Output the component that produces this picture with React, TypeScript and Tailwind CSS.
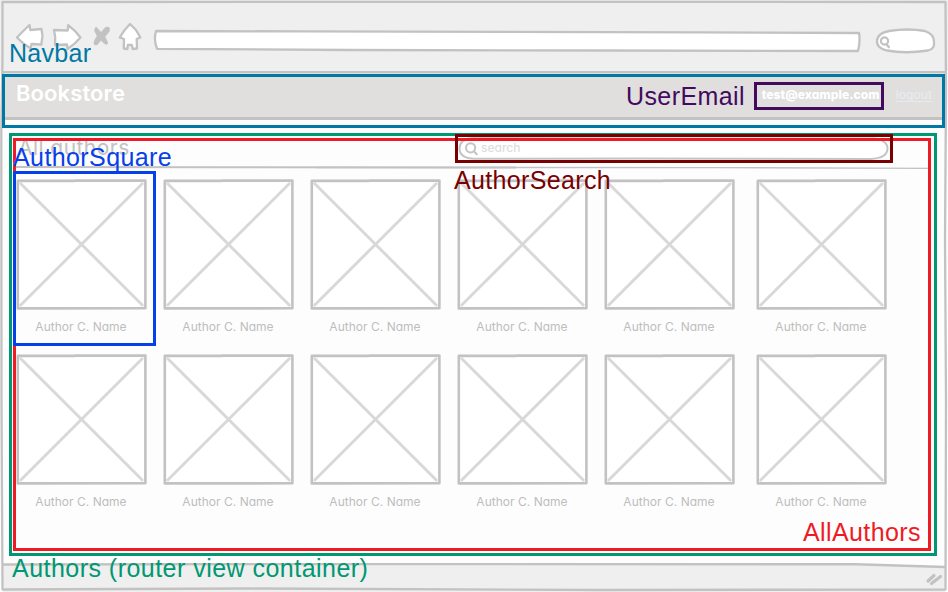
const SKETCH_FONT = "font-['Inter',sans-serif] [font-feature-settings:'cv11'] leading-none whitespace-nowrap";

function AuthorSquare({ name }: { name: string }) {
  return (
    <div className="flex h-[175px] w-[131px] flex-col items-center">
      <svg width="131" height="131" viewBox="0 0 131 131" fill="none" strokeLinecap="round" strokeLinejoin="round">
        <rect x="1.5" y="1.5" width="128" height="128" fill="#fff" />
        <path d="M4.8 4.8L126.2 126M126.2 4.8L4.8 126" stroke="#d8d8d8" strokeWidth="2.9" />
        <path d="M1.8 1.9L58 1.9L60 1.6L129.4 1.6L129.4 129.3L26 129.4L1.8 129.4Z" stroke="#c2c2c2" strokeWidth="2.6" />
      </svg>
      <span className={`${SKETCH_FONT} mt-[11px] pr-px text-[12px] tracking-[0.02px] text-[#bdbdbd]`}>{name}</span>
    </div>
  );
}

function BrowserBar() {
  return (
    <header className="h-[71px] shrink-0 bg-[#efefef]">
      <svg width="948" height="71" viewBox="0 0 948 71" fill="#fff" stroke="#c2c2c2" strokeWidth="2.3" strokeLinejoin="round" strokeLinecap="round">
        <path d="M17 37.5Q24 30 29.5 25L30.3 30L41.5 29L42.5 36L41.3 44.5L31.5 44L30.5 48.5Q22 43 17 37.5Z" />
        <path d="M54 30L67.7 30.5L68.2 25.2Q75 30 80.5 37.5Q75 44 67.5 49L67 44.5L55 45L55.2 37Z" />
        <path d="M96 28L101 33.5L106 28Q110 27 108.6 31L104 36.5L107 42.5Q106.5 45 103.8 42L101 39L97 44Q93.5 45.5 95.2 40.5L98 36L95.2 30.5Z" fill="#c2c2c2" strokeWidth="2" />
        <path d="M130 24L136 30L140.4 37.5L136.7 39L137 48.5L132.7 49L131.8 45L127.8 45L127.4 49L123.8 48.5L124 39L119.7 37.5Q124 30 130 24Z" />
        <path d="M156 31L300 31.4L700 32.3L859 33Q860.5 42 858 51L600 50.5L350 50L157 48.8Q153.5 40 156 31Z" />
        <path d="M889 31Q908 28 925 31Q934 34 934 42Q935 49 928 50.5Q905 54 887 50.5Q876 48 877 40Q878 33 889 31Z" />
        <circle cx="884.5" cy="41" r="3.6" fill="none" strokeWidth="2.2" />
        <path d="M886.7 44.5L888.7 47" strokeWidth="2.4" />
      </svg>
    </header>
  );
}

function Navbar() {
  return (
    <nav className="ml-[2px] mr-[2px] flex h-[49px] shrink-0 items-start border-b-[3px] border-t-2 border-[#c2c2c2] bg-[#e0dfde] pl-[14px] pr-[14px]">
      <span className={`${SKETCH_FONT} mt-[9px] flex-1 text-[22px] font-semibold tracking-[0.1px] text-white`}>Bookstore</span>
      <span className={`${SKETCH_FONT} mt-[16px] w-[134px] text-[12px] font-extrabold tracking-[0.08px] text-white`}>test@example.com</span>
      <a className={`${SKETCH_FONT} mt-[16px] text-[12px] font-medium text-[#e7ebf0] underline underline-offset-2`}>logout</a>
    </nav>
  );
}

function SearchField() {
  return (
    <div className="relative flex h-[23px] w-[431px] items-center pl-[23px]">
      <svg className="absolute inset-0" width="431" height="23" viewBox="0 0 431 23" fill="none" stroke="#c4c4c4" strokeWidth="2" strokeLinecap="round">
        <path d="M14 1L200 1.4L416 1.5Q429.5 3 429.5 12Q429 21 413 22L180 21.5L16 21.8Q1.5 21 1.5 11.5Q2 2 14 1Z" fill="#fff" />
        <circle cx="12.6" cy="10.8" r="4.6" />
        <path d="M15.8 14.2L18.8 17.2" />
      </svg>
      <span className={`${SKETCH_FONT} relative mb-[2px] text-[12px] font-medium text-[#dedede]`}>search</span>
    </div>
  );
}

const LABEL = "absolute font-['Liberation_Sans',sans-serif] text-[25px] leading-[28px] whitespace-nowrap";

function Annotations() {
  return (
    <div className="pointer-events-none absolute inset-0">
      <div className="absolute left-[2px] top-[74px] h-[54px] w-[943px] border-3 border-[#0078a4]" />
      <div className="absolute left-[9px] top-[133px] h-[423px] w-[928px] border-3 border-[#009872]" />
      <div className="absolute left-[13px] top-[138px] h-[413px] w-[918px] border-3 border-[#ed1c24]" />
      <div className="absolute left-[13px] top-[171px] h-[175px] w-[143px] border-3 border-[#0540ea]" />
      <div className="absolute left-[754px] top-[82px] h-[28px] w-[130px] border-3 border-[#430a5e]" />
      <div className="absolute left-[455px] top-[134px] h-[29px] w-[438px] border-3 border-[#780000]" />
      <span className={`${LABEL} left-[9px] top-[39px] tracking-[0.3px] text-[#0078a4]`}>Navbar</span>
      <span className={`${LABEL} left-[626px] top-[82px] tracking-[0.4px] text-[#430a5e]`}>UserEmail</span>
      <span className={`${LABEL} left-[13px] top-[143px] tracking-[0.4px] text-[#0540ea]`}>AuthorSquare</span>
      <span className={`${LABEL} left-[454px] top-[166px] tracking-[0.35px] text-[#780000]`}>AuthorSearch</span>
      <span className={`${LABEL} left-[803px] top-[518px] tracking-[0.4px] text-[#ed1c24]`}>AllAuthors</span>
      <span className={`${LABEL} left-[12px] top-[554px] tracking-[0.47px] text-[#009872]`}>Authors (router view container)</span>
    </div>
  );
}

const ROWS = [0, 1];
const COLUMNS = [0, 1, 2, 3, 4];

export default function App() {
  return (
    <div className="relative flex h-[592px] w-[948px] flex-col overflow-hidden bg-[#fdfdfd]">
      <BrowserBar />
      <Navbar />
      <main className="flex flex-1 flex-col pl-[16px] pr-[17px] pt-[17px]">
        <div className="flex h-[32px] items-start">
          <h1 className={`${SKETCH_FONT} w-[442px] pl-[2px] text-[21px] tracking-[0.45px] text-[#c2c2c2]`}>All authors</h1>
          <SearchField />
        </div>
        <svg className="-mt-[3px]" width="915" height="4" viewBox="0 0 915 4" stroke="#c2c2c2" fill="none">
          <path d="M0 1L200 1.2L500 1.5" strokeWidth="2" />
          <path d="M300 1.5L700 1.6L915 2.4" strokeWidth="1.4" />
        </svg>
        <div className="pt-[9px]">
          {ROWS.map((row) => (
            <div key={row} className="flex gap-[16px]">
              {COLUMNS.map((column) => (
                <AuthorSquare key={column} name="Author C. Name" />
              ))}
              <div className="ml-[5px]">
                <AuthorSquare name="Author C. Name" />
              </div>
            </div>
          ))}
        </div>
      </main>
      <footer className="flex h-[29px] shrink-0">
        <svg width="948" height="29" viewBox="0 0 948 29" stroke="#c2c2c2" strokeLinecap="round">
          <path d="M3 1.5L300 1L856 1L945 4V29H3Z" fill="#efefef" stroke="none" />
          <path d="M3 1.5L300 1L856 1.3L945 4" strokeWidth="2.4" fill="none" />
          <path d="M928 18L934 12.5M931.5 20.5L940.5 13.5" strokeWidth="3.2" />
        </svg>
      </footer>
      <svg className="absolute inset-0" width="948" height="592" viewBox="0 0 948 592" fill="none" stroke="#c2c2c2" strokeWidth="2.3" strokeLinejoin="round">
        <path d="M2.5 2L400 1.8L945.5 2L946 90L945 240L946 400L945.5 589.5L600 590L250 588.5L2.5 589.5L1.5 400L1.3 130L2.5 60Z" />
      </svg>
      <Annotations />
    </div>
  );
}
